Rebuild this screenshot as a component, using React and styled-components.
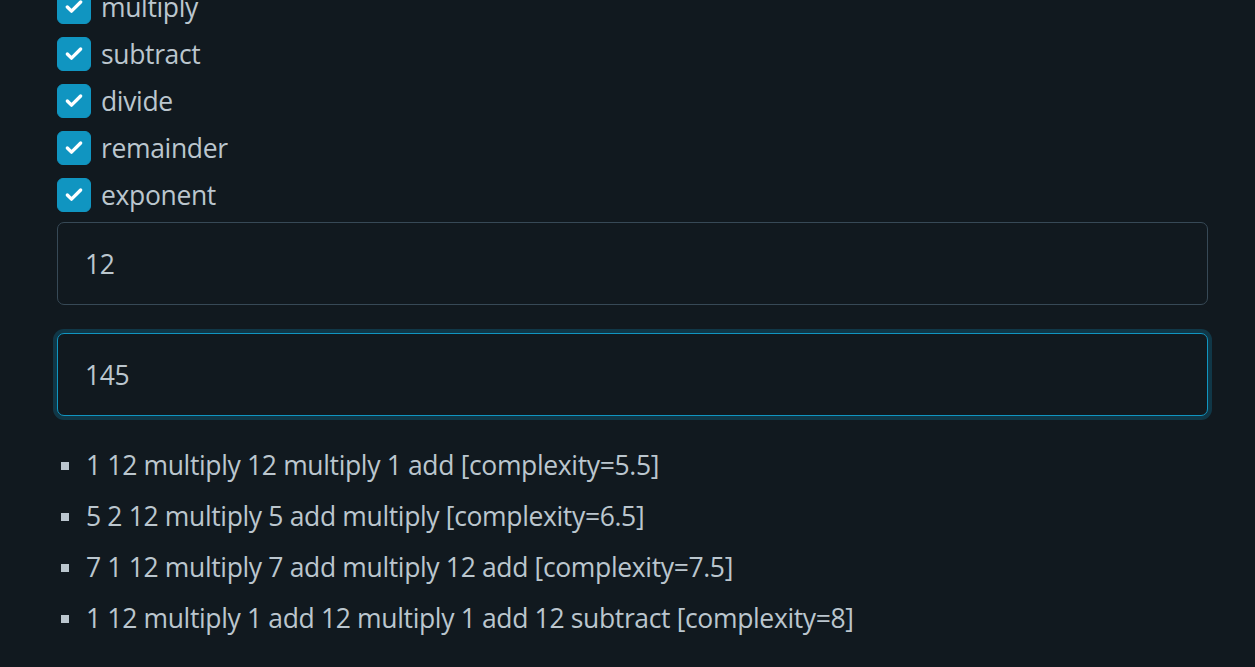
import React, { useEffect, useRef } from "react";
import styled, { createGlobalStyle } from "styled-components";

const GlobalStyle = createGlobalStyle`
  html, body {
    margin: 0;
    padding: 0;
    background: #11191f;
  }
  body {
    font-family: "Open Sans", "Noto Sans", "Liberation Sans", sans-serif;
    color: #bbc6ce;
    font-size: 26.5px;
    letter-spacing: -0.35px;
    overflow: hidden;
  }
`;

const Page = styled.main`
  width: 1151px;
  margin: -13px 0 0 57px;
`;

const Options = styled.fieldset`
  border: 0;
  margin: 0 0 7px;
  padding: 0;
`;

const Option = styled.label`
  display: flex;
  align-items: center;
  gap: 10px;
  height: 40px;
  margin-bottom: 7px;
  line-height: 40px;
  cursor: pointer;

  &:last-child {
    margin-bottom: 0;
  }
`;

const Box = styled.span`
  display: flex;
  align-items: center;
  justify-content: center;
  width: 34px;
  height: 34px;
  box-sizing: border-box;
  border-radius: 6px;
  background: #1095c1;
  border: 1px solid #1095c1;
  flex-shrink: 0;
`;

const Field = styled.input`
  display: block;
  width: 100%;
  height: 83px;
  box-sizing: border-box;
  margin: 0 0 28px;
  padding: 0 27px;
  border: 1px solid ${(p) => (p.$focused ? "#1095c1" : "#374956")};
  border-radius: 7px;
  background: #11191f;
  color: #bbc6ce;
  font: inherit;
  letter-spacing: inherit;
  outline: none;
  box-shadow: ${(p) => (p.$focused ? "0 0 0 4px rgba(16, 149, 193, 0.25)" : "none")};
  caret-color: #bbc6ce;
`;

const Results = styled.ul`
  list-style: none;
  margin: 29px 0 0;
  padding: 0;
`;

const Result = styled.li`
  position: relative;
  height: 40px;
  line-height: 40px;
  margin-bottom: 11px;
  padding-left: 29px;
  white-space: nowrap;

  &::before {
    content: "";
    position: absolute;
    left: 4px;
    top: 17px;
    width: 8px;
    height: 8px;
    background: #bbc6ce;
  }
`;

const ops = ["add", "multiply", "subtract", "divide", "remainder", "exponent"];

const results = [
  "1 12 multiply 12 multiply 1 add [complexity=5.5]",
  "5 2 12 multiply 5 add multiply [complexity=6.5]",
  "7 1 12 multiply 7 add multiply 12 add [complexity=7.5]",
  "1 12 multiply 1 add 12 multiply 1 add 12 subtract [complexity=8]",
];

function Check() {
  return (
    <svg width="20" height="20" viewBox="0 0 24 24" fill="none" stroke="#fff" strokeWidth="4" strokeLinecap="round" strokeLinejoin="round">
      <polyline points="20 6 9 17 4 12" />
    </svg>
  );
}

export default function App() {
  const target = useRef(null);
  useEffect(() => {
    if (target.current) {
      target.current.focus();
      target.current.setSelectionRange(2, 2);
    }
  }, []);

  return (
    <Page>
      <GlobalStyle />
      <Options>
        {ops.slice(1).map((op) => (
          <Option key={op}>
            <Box>
              <Check />
            </Box>
            {op}
          </Option>
        ))}
      </Options>
      <Field defaultValue="12" />
      <Field ref={target} defaultValue="145" $focused />
      <Results>
        {results.map((r) => (
          <Result key={r}>{r}</Result>
        ))}
      </Results>
    </Page>
  );
}
